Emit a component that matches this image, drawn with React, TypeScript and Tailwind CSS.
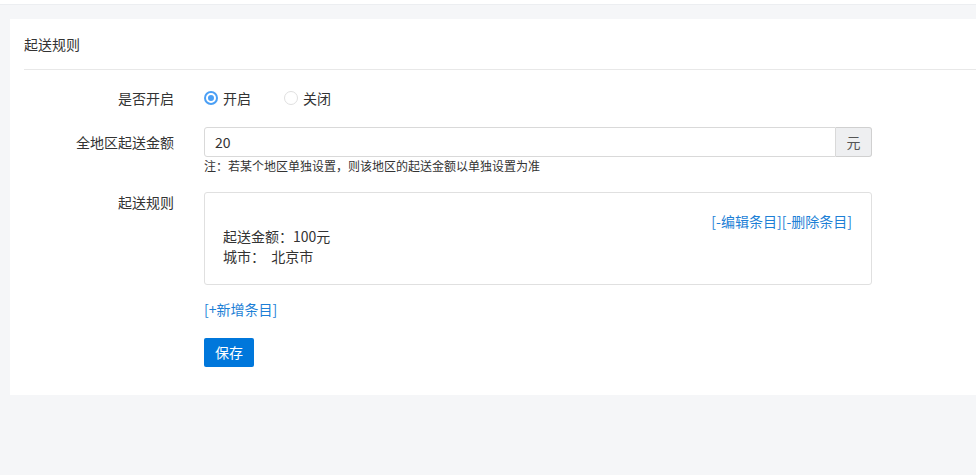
import React from 'react';

const Label: React.FC<{ children: React.ReactNode }> = ({ children }) => (
  <div className="w-[180px] shrink-0 text-right pr-[30px] text-[14px] leading-[20px] text-[#333]">{children}</div>
);

export default function App() {
  return (
    <div
      className="w-[976px] h-[475px] bg-[#f5f6f8] overflow-hidden"
      style={{ fontFamily: '"Microsoft YaHei", "Noto Sans CJK SC", "Liberation Sans", sans-serif' }}
    >
      <div className="h-[5px] bg-white border-b border-[#eceef1]"></div>
      <div className="ml-[10px] mt-[14px] h-[376px] bg-white pl-[14px]">
        <div className="h-[51px] border-b border-[#e8e8e8] flex items-center text-[14px] text-[#333]">起送规则</div>
        <div className="pt-[18px] flex flex-col">
          <div className="flex items-center h-[20px]">
            <Label>是否开启</Label>
            <div className="flex items-center text-[14px] text-[#333]">
              <span className="w-[14px] h-[14px] rounded-full bg-[#4a9ff5] flex items-center justify-center">
                <span className="w-[10px] h-[10px] rounded-full border-[2px] border-white bg-[#4a9ff5]"></span>
              </span>
              <span className="ml-[5px]">开启</span>
              <span className="ml-[33px] w-[14px] h-[14px] rounded-full border border-[#e0e0e0] bg-white"></span>
              <span className="ml-[5px]">关闭</span>
            </div>
          </div>
          <div className="flex mt-[19px]">
            <div className="pt-[5px]">
              <Label>全地区起送金额</Label>
            </div>
            <div className="flex flex-col">
              <div className="flex w-[668px] h-[30px]">
                <div className="flex-1 border border-[#d9d9d9] rounded-l-[3px] px-[10px] flex items-center text-[14px] text-[#333]">20</div>
                <div className="w-[36px] border border-l-0 border-[#d0d0d0] bg-[#eeeff1] rounded-r-[3px] flex items-center justify-center text-[14px] text-[#555]">元</div>
              </div>
              <div className="mt-[1px] text-[12px] leading-[16px] text-[#333]">注：若某个地区单独设置，则该地区的起送金额以单独设置为准</div>
            </div>
          </div>
          <div className="flex mt-[18px]">
            <div className="pt-[0px]">
              <Label>起送规则</Label>
            </div>
            <div className="flex flex-col">
              <div className="w-[668px] h-[93px] border border-[#e0e0e0] rounded-[3px] pl-[18px] pr-[19px] pt-[18px]">
                <div className="flex justify-end text-[14px] leading-[20px] text-[#1d7fd6]">[-编辑条目][-删除条目]</div>
                <div className="mt-[-5px] text-[14px] leading-[20px] text-[#333]">起送金额：100元</div>
                <div className="text-[14px] leading-[20px] text-[#333]">城市：&nbsp; 北京市</div>
              </div>
              <div className="mt-[14px] text-[14px] leading-[20px] text-[#1d7fd6]">[+新增条目]</div>
              <div className="mt-[19px]">
                <button className="w-[50px] h-[29px] bg-[#0077db] rounded-[2px] text-white text-[14px]">保存</button>
              </div>
            </div>
          </div>
        </div>
      </div>
    </div>
  );
}
